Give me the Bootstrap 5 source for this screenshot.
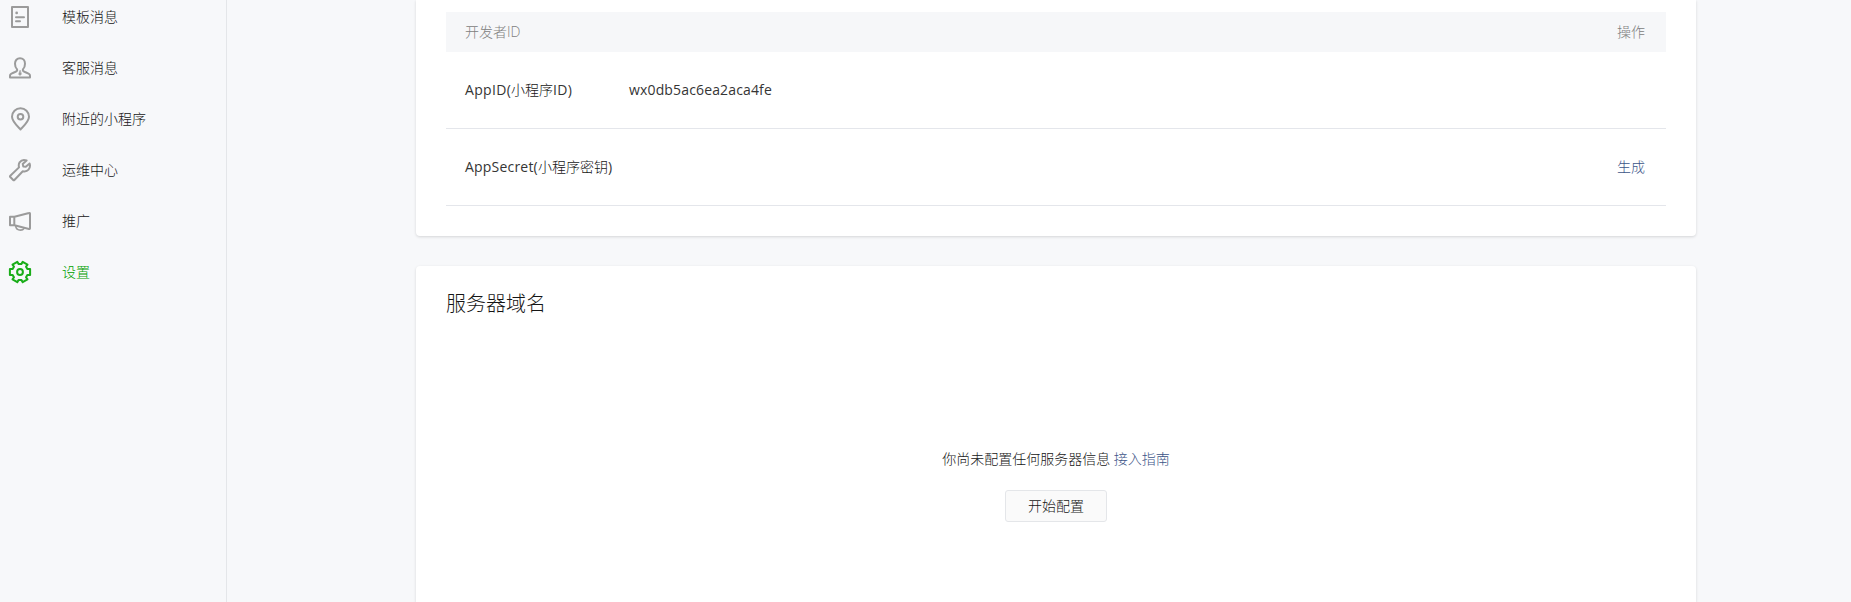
<!DOCTYPE html>
<html lang="zh-CN">
<head>
<meta charset="utf-8">
<meta name="viewport" content="width=device-width, initial-scale=1">
<title>设置</title>
<link href="https://cdn.jsdelivr.net/npm/bootstrap@5.3.0/dist/css/bootstrap.min.css" rel="stylesheet">
<style>
body{font-family:"Open Sans","Noto Sans CJK SC",sans-serif;font-size:14px;font-weight:300;line-height:22px;color:#151515;background:#f7f8fa}
.page{height:602px}
.side{width:227px;border-right:1px solid #e4e6e9}
.side .nav-link{height:51px;padding:0 0 0 8px;color:#151515;gap:30px}
.side .nav-link:first-child{height:42px;padding-bottom:8px}
.side .nav-link svg{width:24px;height:24px;fill:none;stroke:#9b9b9b;stroke-width:2;stroke-linejoin:round;stroke-linecap:round;flex:none}
.side .nav-link.active{color:#00a000}
.side .nav-link.active svg{stroke:#1aad19}
.main{width:1280px;margin-left:189px}
.panel{background:#fff;box-shadow:0 1px 3px rgba(0,0,0,.14)}
.panel-top{height:236px;padding:12px 30px 0;border-radius:0 0 4px 4px}
.panel-bottom{height:336px;margin-top:30px;padding:23px 30px 0;border-radius:4px 4px 0 0}
.thead-bar{height:40px;padding:0 21px 0 19px;background:#f6f7f9;color:#808080}
.line-row{height:77px;padding:0 21px 0 19px;border-bottom:1px solid #e4e6eb}
.key{width:164px}
.latin{font-weight:400;color:#353535}
.key .latin{letter-spacing:.32px}
.secret .latin{letter-spacing:.2px}
.app-id{letter-spacing:.15px}
.title{font-size:20px;line-height:30px;font-weight:300}
.go{color:#3c5488;text-decoration:none}
.empty{padding-top:129px}
.btn-set{width:102px;height:32px;padding:0;font-size:14px;font-weight:300;line-height:30px;border:1px solid #e4e6e9;border-radius:3px;background:#fafafa;color:#151515;margin-top:20px}
</style>
</head>
<body>
<div class="page d-flex overflow-hidden">
  <nav class="side nav flex-column flex-nowrap flex-shrink-0">
    <a class="nav-link d-flex align-items-center" href="#"><svg viewBox="0 0 24 24"><path d="M4 2h16v20H4z"/><path d="M8 12.200h8M8 16.200h4"/><path d="M8.600 7.900h.1" stroke-width="2.600"/></svg><span>模板消息</span></a>
    <a class="nav-link d-flex align-items-center" href="#"><svg viewBox="0 0 24 24"><path d="M9.100 13.400C7.600 11.900 7 9.800 7 7.700 7 4.500 9 2.300 12 2.300s5 2.200 5 5.400c0 2.100-.6 4.200-2.100 5.700v1.300c0 .7 4.500 2.200 6.200 3.300.7.500.9 1 .9 1.800V21.500H2v-1.700c0-.8.200-1.300.9-1.800 1.700-1.100 6.200-2.600 6.200-3.300z"/><path d="M12 14.500l-1.300 3.700L12 19.500l1.300-1.300z" fill="#9b9b9b" stroke-width=".6"/></svg><span>客服消息</span></a>
    <a class="nav-link d-flex align-items-center" href="#"><svg viewBox="0 0 24 24"><path d="M12.500 22.500C9 18.800 4 14.300 4 9.800a8.500 8.500 0 0 1 17 0c0 4.500-5 9-8.500 12.700z"/><circle cx="12.500" cy="9.700" r="2.800"/></svg><span>附近的小程序</span></a>
    <a class="nav-link d-flex align-items-center" href="#"><svg viewBox="0 0 24 24"><path d="M18.600 2.500c-2.700-1-5.500-.2-7 1.900-1.100 1.600-1 3.300-.6 5L2.300 17.800c-.4.400-.4.800 0 1.200l2.900 3c.4.400.8.400 1.200 0l8.400-8.800c2.200.5 4.300.1 5.700-1.500 1.500-1.800 1.800-4.100 1.100-6.200l-3.800 3.300-2.500-.3-.6-2.600z"/></svg><span>运维中心</span></a>
    <a class="nav-link d-flex align-items-center" href="#"><svg viewBox="0 0 24 24"><path d="M2 7.800h4.500L21 4c.6-.2 1 .1 1 .7v14.600c0 .6-.4.900-1 .7L6.500 16.200H2zM6.300 8v8"/><path d="M7.700 17c.3 3 2.400 4.100 4.900 4.100 1.600 0 2.600-.4 3.300-1.500" stroke-width="1.700"/></svg><span>推广</span></a>
    <a class="nav-link active d-flex align-items-center" href="#"><svg viewBox="0 0 24 24"><path d="M22.100 9.100v5.800h-2.600L18 17.200l1.500 2.200-4.800 2.700-1.400-2.200h-2.600l-1.400 2.200-4.800-2.700L6 17.200l-1.500-2.300H1.900V9.100h2.600L6 6.800 4.500 4.600l4.800-2.700 1.400 2.200h2.600l1.400-2.200 4.800 2.700L18 6.800l1.500 2.300z"/><circle cx="12" cy="12" r="2.900"/></svg><span>设置</span></a>
  </nav>
  <main class="main flex-shrink-0">
    <section class="panel panel-top">
      <div class="thead-bar d-flex align-items-center justify-content-between"><span>开发者ID</span><span>操作</span></div>
      <div class="line-row d-flex align-items-center"><span class="key"><span class="latin">AppID(</span>小程序<span class="latin">ID)</span></span><span class="app-id latin">wx0db5ac6ea2aca4fe</span></div>
      <div class="line-row d-flex align-items-center justify-content-between"><span class="secret"><span class="latin">AppSecret(</span>小程序密钥<span class="latin">)</span></span><a class="go" href="#">生成</a></div>
    </section>
    <section class="panel panel-bottom">
      <h2 class="title m-0">服务器域名</h2>
      <div class="empty d-flex flex-column align-items-center">
        <div>你尚未配置任何服务器信息 <a class="go" href="#">接入指南</a></div>
        <button type="button" class="btn btn-set">开始配置</button>
      </div>
    </section>
  </main>
</div>
<script src="https://cdn.jsdelivr.net/npm/bootstrap@5.3.0/dist/js/bootstrap.bundle.min.js"></script>
</body>
</html>
